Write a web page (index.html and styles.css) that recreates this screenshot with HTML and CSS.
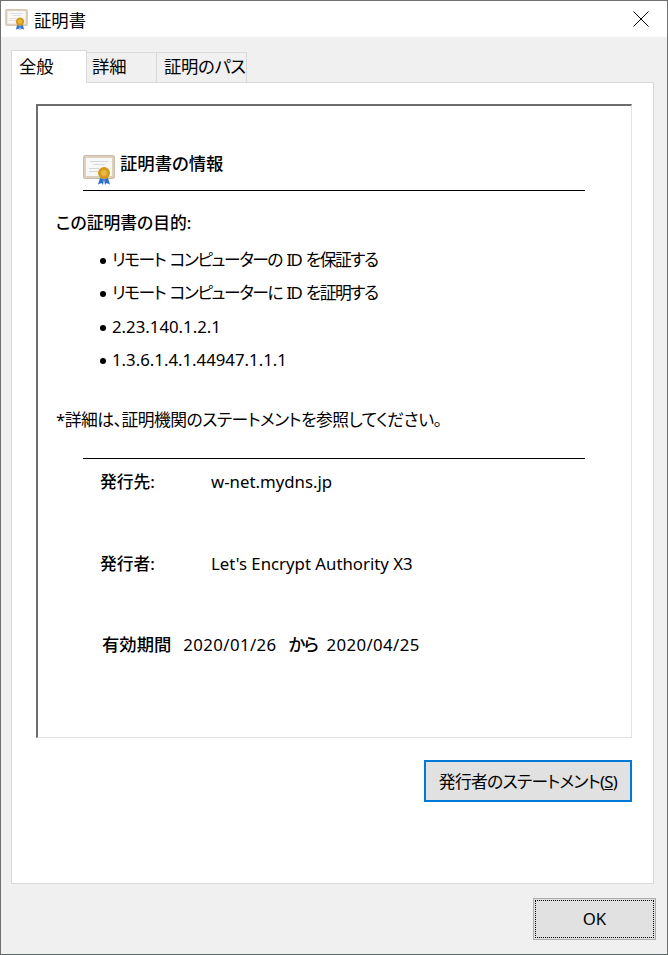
FILE: index.html
```html
<!DOCTYPE html>
<html lang="ja">
<head>
    <meta charset="UTF-8">
    <title>証明書</title>
    <link rel="stylesheet" href="styles.css">
</head>
<body>
    <svg class="defs" width="0" height="0">
        <symbol id="cert" viewBox="0 0 32 30">
            <rect x="0.500" y="0.500" width="31" height="23" rx="1.500" fill="#dccfbc" stroke="#c9bca8"/>
            <rect x="3" y="3" width="26" height="18" fill="#f8f8f6"/>
            <rect x="7" y="6" width="18" height="1" fill="#cfd6e2"/>
            <rect x="10" y="9" width="12" height="1" fill="#d6dbe3"/>
            <rect x="6" y="13" width="10" height="1" fill="#d6d6d6"/>
            <rect x="6" y="16" width="9" height="1" fill="#d6d6d6"/>
            <path d="M17 23l-2 6.500 3.500-1.500 1.500 2 1-6zM25 23l2 6.500-3.500-1.500-1.500 2-1-6z" fill="#2f6fd0"/>
            <circle cx="21" cy="18" r="6" fill="#d49a1e"/>
            <circle cx="21" cy="18" r="3" fill="#e9b93f"/>
        </symbol>
    </svg>
    <div class="window">
        <div class="titlebar">
            <svg class="title-icon"><use href="#cert"/></svg>
            <span class="title">証明書</span>
            <svg class="close" viewBox="0 0 16 16"><path d="M0.500 0.500L15.500 15.500M15.500 0.500L0.500 15.500" stroke="#000" stroke-width="1" fill="none"/></svg>
        </div>
        <div class="content">
            <div class="tabs">
                <div class="tab active">全般</div>
                <div class="tab second">詳細</div>
                <div class="tab third">証明のパス</div>
            </div>
            <div class="panel">
                <div class="info">
                    <div class="info-head">
                        <svg class="head-icon"><use href="#cert"/></svg>
                        <span class="head-text">証明書の情報</span>
                    </div>
                    <div class="purpose">この証明書の目的:</div>
                    <ul class="purposes">
                        <li class="kana">リモート コンピューターの ID を保証する</li>
                        <li class="kana">リモート コンピューターに ID を証明する</li>
                        <li>2.23.140.1.2.1</li>
                        <li>1.3.6.1.4.1.44947.1.1.1</li>
                    </ul>
                    <div class="note">*詳細は、証明機関のステートメントを参照してください。</div>
                    <div class="details">
                        <div class="detail"><b class="label">発行先:</b><span>w-net.mydns.jp</span></div>
                        <div class="detail"><b class="label">発行者:</b><span>Let's Encrypt Authority X3</span></div>
                        <div class="detail validity"><b>有効期間</b><span class="date">2020/01/26</span><b class="until">から</b><span class="date end">2020/04/25</span></div>
                    </div>
                </div>
                <div class="panel-actions">
                    <button class="btn statement">発行者のステートメント(<u>S</u>)</button>
                </div>
            </div>
            <div class="footer">
                <button class="btn ok"><span class="ok-focus">OK</span></button>
            </div>
        </div>
    </div>
</body>
</html>
```

FILE: styles.css
```css
* {
    box-sizing: border-box;
}
html, body {
    margin: 0;
    height: 100%;
}
body {
    font-family: "Noto Sans", "Noto Sans CJK JP", sans-serif;
    font-size: 16.8px;
    font-feature-settings: "palt";
    color: #000;
    background: #f0f0f0;
}
.defs {
    display: block;
    height: 0;
}
.window {
    width: 668px;
    height: 955px;
    border: 1px solid #707070;
    border-bottom-color: #56676b;
    background: #f0f0f0;
    display: flex;
    flex-direction: column;
}
.titlebar {
    height: 36px;
    background: #fff;
    display: flex;
    align-items: center;
    padding: 0 18px 0 4px;
    flex: none;
}
.title-icon {
    width: 23px;
    height: 21px;
    margin-right: 6px;
}
.title {
    flex: 1;
    font-size: 17.33px;
}
.close {
    width: 16px;
    height: 16px;
}
.content {
    flex: 1;
    padding: 13px 13px 0 10px;
    display: flex;
    flex-direction: column;
}
.tabs {
    display: flex;
    align-items: flex-end;
    height: 33px;
    margin-bottom: -1px;
    position: relative;
    z-index: 1;
    white-space: nowrap;
    font-size: 17.33px;
}
.tab {
    height: 31px;
    border: 1px solid #d9d9d9;
    background: #f0f0f0;
    line-height: 27px;
    margin-left: -1px;
}
.tab.active {
    height: 33px;
    width: 76px;
    margin-left: 0;
    background: #fff;
    border-bottom-color: #fff;
    padding-left: 7px;
    line-height: 31px;
}
.tab.second {
    width: 71px;
    padding-left: 5px;
}
.tab.third {
    width: 91px;
    padding-left: 7px;
    letter-spacing: -0.3px;
}
.panel {
    height: 802px;
    background: #fff;
    border: 1px solid #d9d9d9;
    padding: 21px 21px 0 24px;
    flex: none;
}
.info {
    height: 634px;
    border-style: solid;
    border-color: #6d6d6d #e3e3e3 #e3e3e3 #6d6d6d;
    border-width: 2px 1px 1px 2px;
    padding: 0 46px 0 18px;
}
.info-head {
    display: flex;
    align-items: flex-start;
    margin: 49px 0 0 27px;
    height: 36px;
    border-bottom: 1px solid #000;
}
.head-icon {
    width: 32px;
    height: 30px;
    margin-right: 5px;
}
.head-text {
    font-weight: 500;
    line-height: 16px;
    font-size: 17.33px;
}
.purpose {
    margin-top: 20px;
    font-weight: 500;
    line-height: 24px;
}
.purposes {
    list-style: none;
    margin: 13px 0 0 44px;
    padding: 0;
}
.purposes li {
    height: 33.3px;
    line-height: 24px;
    padding-left: 12px;
    position: relative;
}
.purposes li.kana {
    letter-spacing: -1.5px;
    word-spacing: 1.5px;
}
.purposes li::before {
    content: "";
    position: absolute;
    left: 0;
    top: 10px;
    width: 6px;
    height: 6px;
    border-radius: 50%;
    background: #000;
}
.note {
    margin-top: 27px;
    line-height: 24px;
    letter-spacing: -0.5px;
}
.details {
    margin: 26px 0 0 27px;
    border-top: 1px solid #000;
    padding-left: 17px;
}
.detail {
    display: flex;
    line-height: 24px;
    margin-top: 11px;
    height: 71px;
}
.label {
    font-weight: 500;
    width: 111px;
}
.validity {
    gap: 12px;
    margin-top: 9px;
    margin-left: 2px;
    align-items: baseline;
}
.validity b {
    font-weight: 500;
    font-size: 17.33px;
}
.validity .until {
    letter-spacing: -1.5px;
}
.date {
    letter-spacing: 0.4px;
}
.date.end {
    margin-left: -3px;
}
.panel-actions {
    display: flex;
    justify-content: flex-end;
    margin-top: 22px;
}
.btn {
    font: inherit;
    color: #000;
    background: #e1e1e1;
    padding: 0;
    font-feature-settings: inherit;
}
.statement {
    width: 208px;
    height: 42px;
    border: 2px solid #0078d7;
    letter-spacing: -0.7px;
}
.footer {
    display: flex;
    justify-content: flex-end;
    padding: 14px 0 0;
    margin-right: -2px;
}
.ok {
    width: 123px;
    height: 42px;
    border: 1px solid #adadad;
    padding: 1px;
}
.ok-focus {
    display: block;
    height: 100%;
    line-height: 36px;
    border: 1px dotted #000;
}
```
